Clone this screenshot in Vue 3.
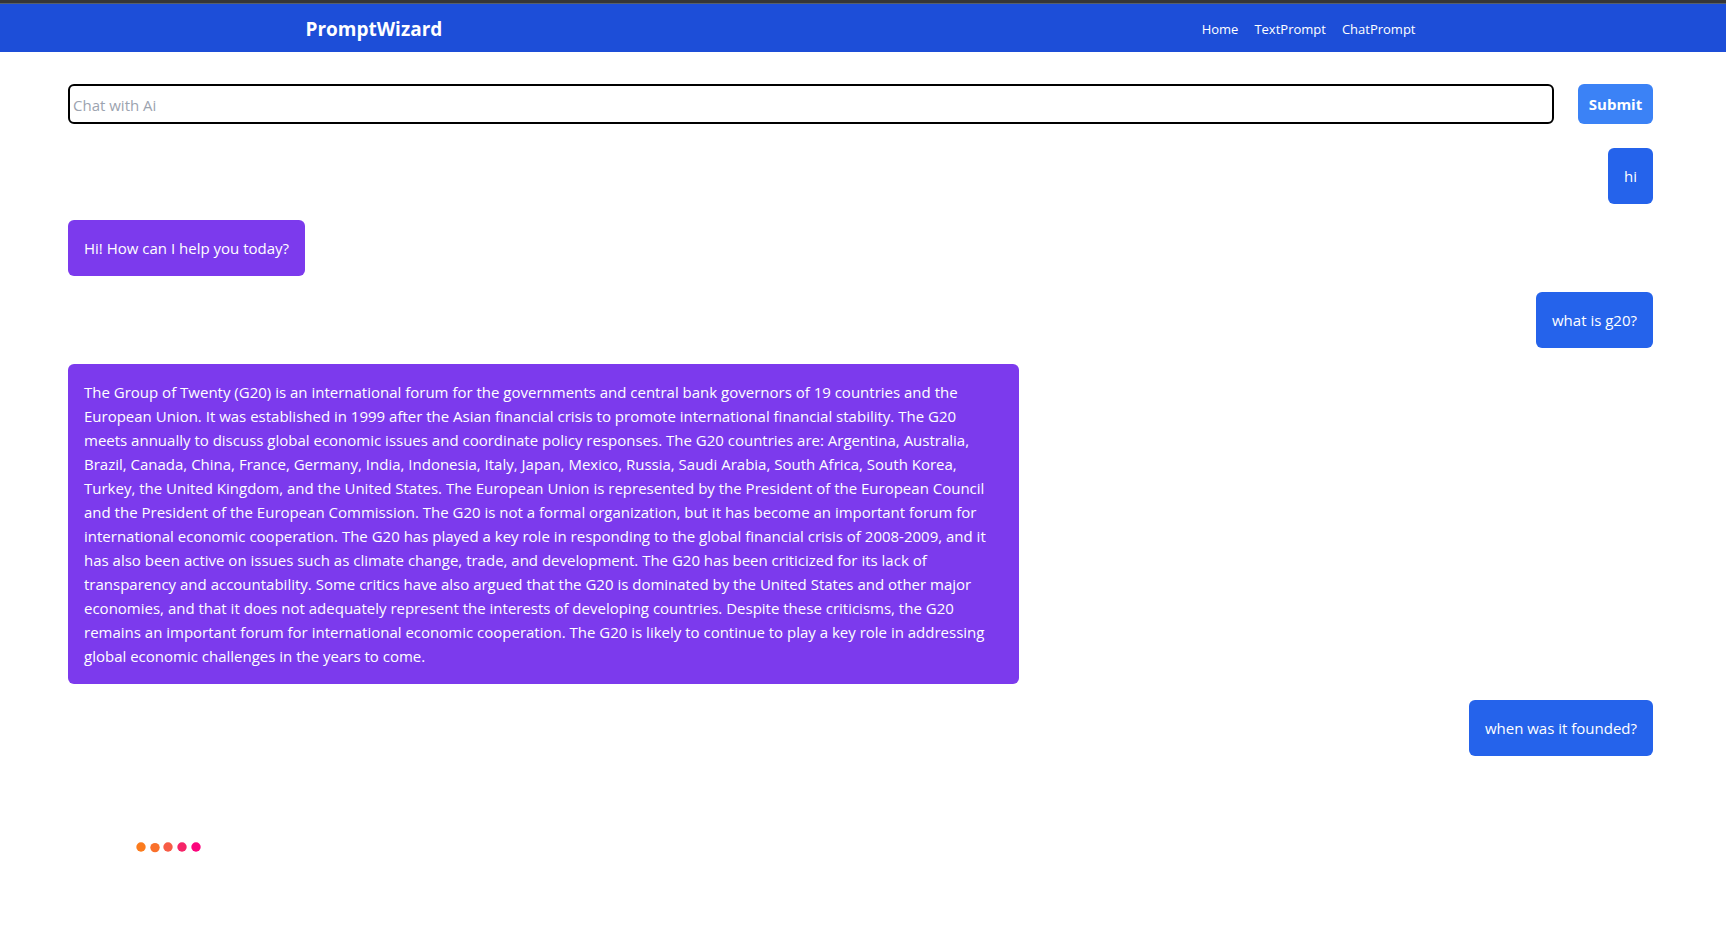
<script setup>
import { ref } from 'vue'

const prompt = ref('')

const links = ['Home', 'TextPrompt', 'ChatPrompt']

const answer = [
  'The Group of Twenty (G20) is an international forum for the governments and central bank governors of 19 countries and the',
  'European Union. It was established in 1999 after the Asian financial crisis to promote international financial stability. The G20',
  'meets annually to discuss global economic issues and coordinate policy responses. The G20 countries are: Argentina, Australia,',
  'Brazil, Canada, China, France, Germany, India, Indonesia, Italy, Japan, Mexico, Russia, Saudi Arabia, South Africa, South Korea,',
  'Turkey, the United Kingdom, and the United States. The European Union is represented by the President of the European Council',
  'and the President of the European Commission. The G20 is not a formal organization, but it has become an important forum for',
  'international economic cooperation. The G20 has played a key role in responding to the global financial crisis of 2008-2009, and it',
  'has also been active on issues such as climate change, trade, and development. The G20 has been criticized for its lack of',
  'transparency and accountability. Some critics have also argued that the G20 is dominated by the United States and other major',
  'economies, and that it does not adequately represent the interests of developing countries. Despite these criticisms, the G20',
  'remains an important forum for international economic cooperation. The G20 is likely to continue to play a key role in addressing',
  'global economic challenges in the years to come.',
].join(' ')

const messages = [
  { from: 'user', text: 'hi' },
  { from: 'bot', text: 'Hi! How can I help you today?' },
  { from: 'user', text: 'what is g20?' },
  { from: 'bot', text: answer },
  { from: 'user', text: 'when was it founded?' },
]
</script>

<template>
  <div class="page">
    <header class="navbar">
      <div class="navbar-inner">
        <a class="brand" href="#">PromptWizard</a>
        <nav class="links">
          <a v-for="link in links" :key="link" href="#">{{ link }}</a>
        </nav>
      </div>
    </header>

    <main class="chat">
      <form class="composer" @submit.prevent>
        <input v-model="prompt" type="text" placeholder="Chat with Ai" aria-label="Chat with Ai" />
        <button type="submit">Submit</button>
      </form>

      <p v-for="(message, i) in messages" :key="i" class="bubble" :class="message.from">{{ message.text }}</p>

      <svg class="loader" viewBox="0 0 66 12" role="img" aria-label="Loading">
        <circle cx="6" cy="6" r="4.7" fill="#fb7b1d" />
        <circle cx="20" cy="6.6" r="4.7" fill="#f9702b" />
        <circle cx="33" cy="6" r="4.7" fill="#f75c45" />
        <circle cx="47" cy="6" r="4.7" fill="#f52468" />
        <circle cx="61" cy="6" r="4.7" fill="#fb047c" />
      </svg>
    </main>
  </div>
</template>

<style>
body {
  background: #fff;
}
</style>

<style scoped>
.page {
  box-sizing: border-box;
  border-top: 3px solid #363636;
  font-family: "Segoe UI", "Open Sans", "Noto Sans", sans-serif;
  font-size: 15px;
  line-height: 24px;
}

.navbar {
  border-top: 1px solid #57606a;
  padding-right: 5px;
  background: #1d4ed8;
}

.navbar-inner {
  display: flex;
  align-items: center;
  justify-content: space-between;
  box-sizing: border-box;
  max-width: 1110px;
  height: 48px;
  margin: 0 auto;
  padding-top: 2px;
}

a {
  color: #fff;
  text-decoration: none;
}

.brand {
  font-size: 19px;
  font-weight: 700;
}

.links {
  display: flex;
  gap: 16px;
  font-size: 13px;
}

.chat {
  display: flex;
  flex-direction: column;
  gap: 16px;
  padding: 32px 73px 32px 68px;
}

.composer {
  display: flex;
  gap: 24px;
  margin-bottom: 8px;
}

.composer input {
  flex: 1;
  box-sizing: border-box;
  min-width: 0;
  height: 40px;
  padding: 4px 3px 2px;
  border: 2px solid #000;
  border-radius: 6px;
  outline: none;
  background: #fff;
  color: #111827;
  font: inherit;
}

.composer input::placeholder {
  color: #9ca3af;
  opacity: 1;
}

.composer button {
  width: 75px;
  height: 40px;
  padding: 0;
  border: 0;
  border-radius: 6px;
  background: #3b82f6;
  color: #fff;
  font: inherit;
  font-weight: 700;
}

.bubble {
  box-sizing: border-box;
  max-width: 60%;
  margin: 0;
  padding: 16px;
  border-radius: 6px;
  color: #fff;
}

.user {
  align-self: flex-end;
  background: #2563eb;
}

.bot {
  align-self: flex-start;
  background: #7c3aed;
}

.loader {
  width: 66px;
  height: 12px;
  margin: 69px 0 0 67px;
}
</style>
